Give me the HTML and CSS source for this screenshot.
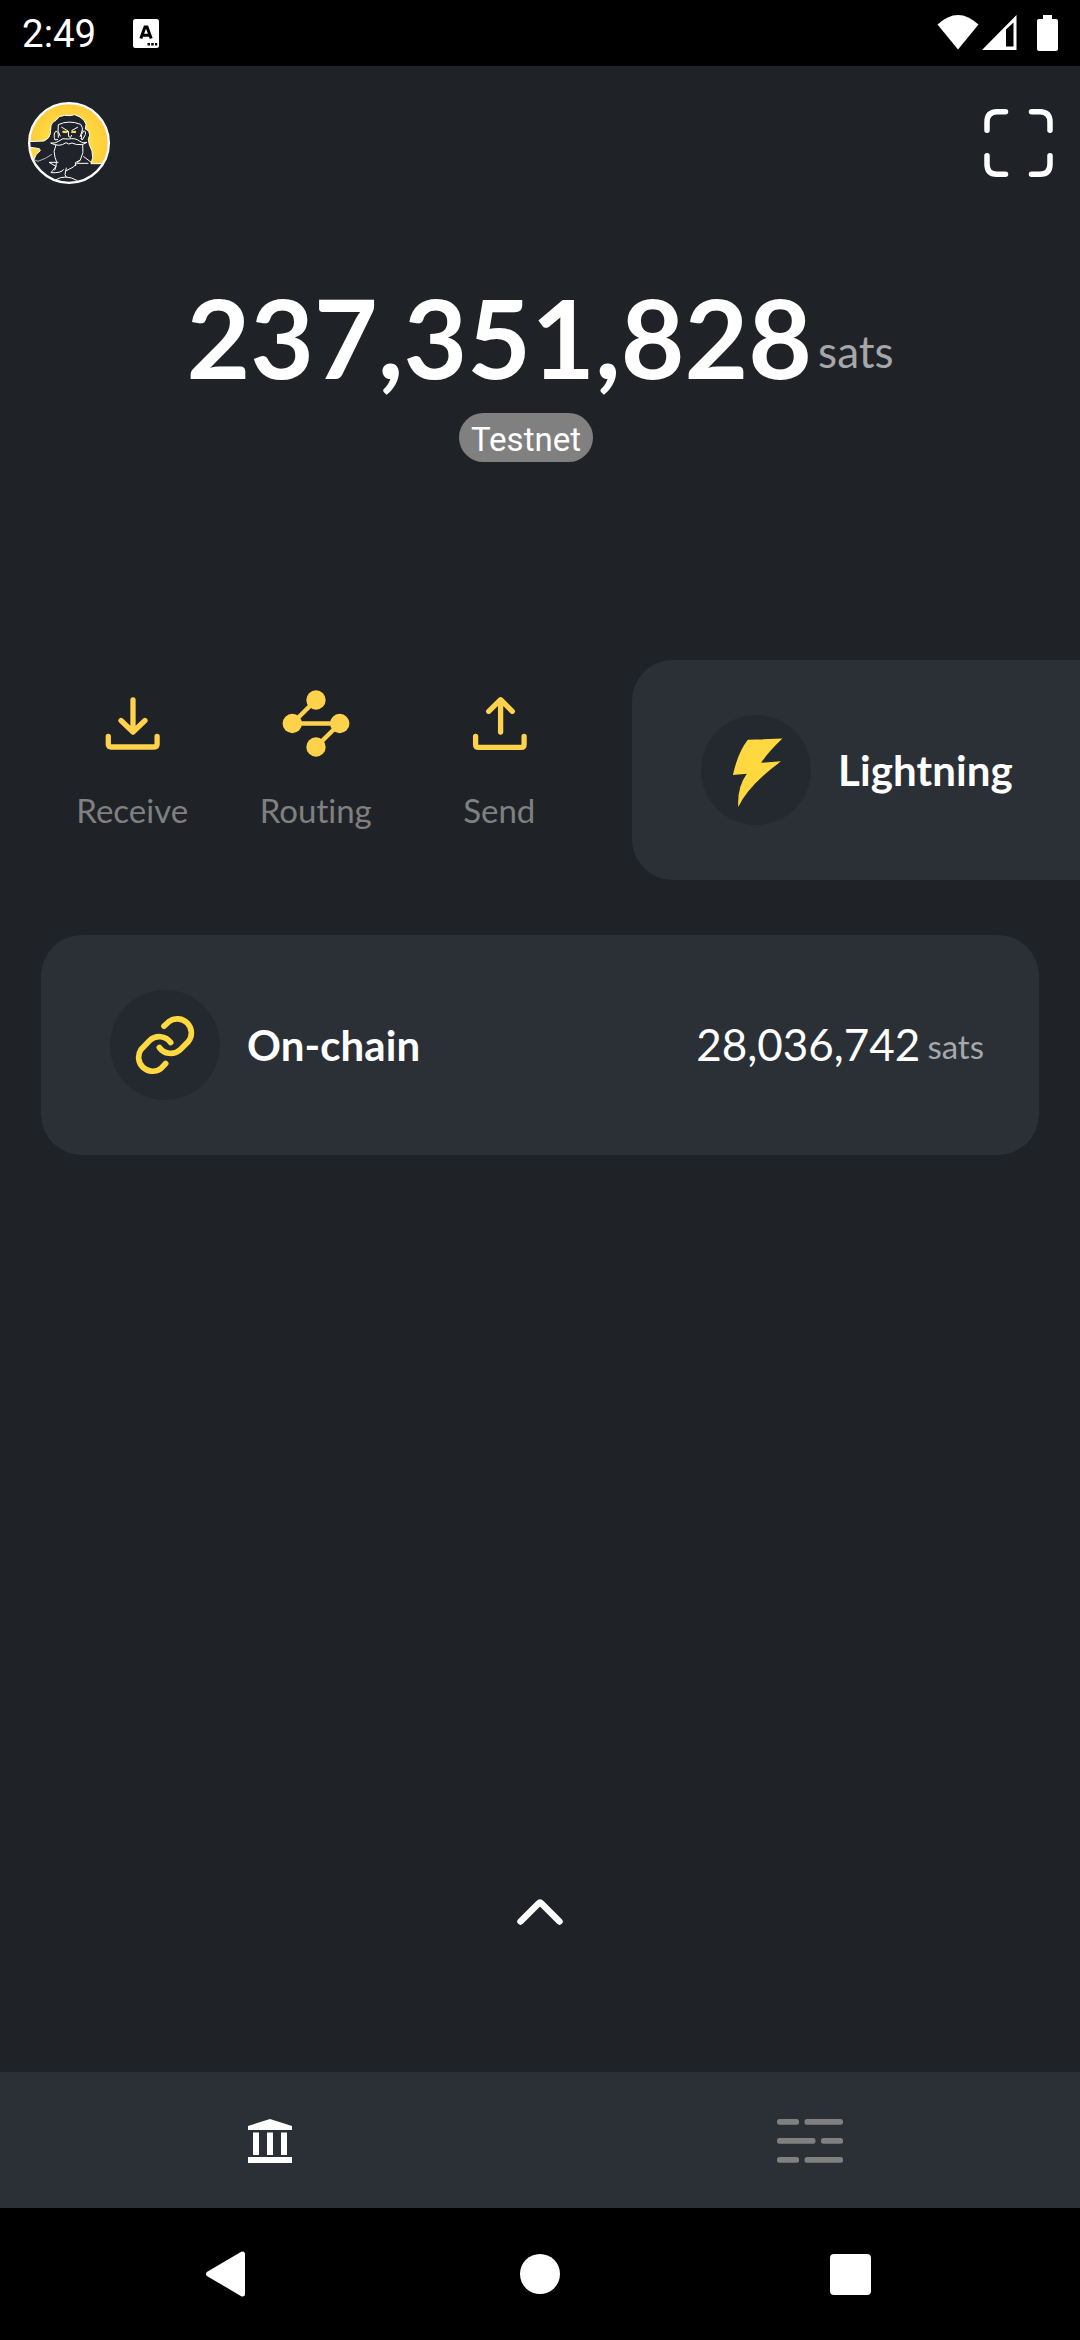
FILE: index.html
```html
<!DOCTYPE html>
<html lang="en">
<head>
<meta charset="utf-8">
<title>Wallet</title>
<link rel="stylesheet" href="styles.css">
</head>
<body>
<header class="status-bar">
  <div class="status-left">
    <span class="clock">2:49</span>
    <svg class="keyboard-icon" viewBox="0 0 26 29"><rect width="26" height="29" rx="2.5" fill="#fff"/><path d="M7.8 19.5 12 8h2l4.200 11.500M9.500 16.200h7" fill="none" stroke="#000" stroke-width="3"/><path d="M14.500 24h2.500v2.500h-2.500zM18.200 24h2.500v2.500h-2.500zM22 24h2.200v2.500H22z"/></svg>
  </div>
  <div class="status-right">
    <svg width="42" height="35" viewBox="0 0 42 35"><path d="M0.500 9.500Q21-9.500 41.500 9.500L21 34.500z" fill="#fff"/></svg>
    <svg class="signal" width="36" height="36" viewBox="0 0 36 36"><path fill-rule="evenodd" d="M0 35 34.500 0V35zM24 14.500V31.500h7.500V7.500z" fill="#fff"/></svg>
    <svg class="battery" width="21" height="36" viewBox="0 0 21 36"><path d="M6 0h9v4h4q2 0 2 2v28q0 2-2 2H2q-2 0-2-2V6q0-2 2-2h4z" fill="#fff"/></svg>
  </div>
</header>

<main class="home">
  <div class="top-bar">
    <svg class="avatar" viewBox="24 21 246 246">
      <defs>
        <clipPath id="face"><circle cx="147" cy="144" r="118"/></clipPath>
        <radialGradient id="glow"><stop offset=".6" stop-color="#ffd93f"/><stop offset="1" stop-color="#ffcb3c"/></radialGradient>
      </defs>
      <g clip-path="url(#face)">
        <circle cx="147" cy="144" r="120" fill="url(#glow)"/>
        <path d="M20 140 72 138Q89 130 91 116L93 92Q97 79 108 76L118 65 134 61 150 62 164 59 180 66 192 76 198 88 196 102 206 108 209 120 205 133 208 149 216 168 218 188 213 206H270V270H20z" fill="#20242a" stroke="#fff" stroke-width="3"/>
        <path d="M26 156 58 161 61 167 49 178 40 197 26 192z" fill="#ffd93f" stroke="#fff" stroke-width="3"/>
        <path d="M37 192 54 199 76 190 96 178" fill="none" stroke="#fff" stroke-width="2"/>
        <g fill="none" stroke="#fff" stroke-width="3">
          <path d="M115 89Q146 74 182 88L187 98V109M115 89 114 108 121 124M187 105 180 126"/>
          <path d="M107 109Q99 118 105 135L114 133M107 109Q116 107 115 128M191 108Q198 107 196 119L187 135 182 130M191 108Q181 117 185 132"/>
          <path d="M124 96 144 108 137 113M174 96 155 107 162 113M145 108 146 125 152 127 155 120"/>
          <path d="M92 144Q107 146 115 139 127 127 145 132Q167 128 178 138 188 147 201 142L187 149Q166 150 156 144L146 147 138 143Q118 158 92 144z"/>
          <path d="M108 149Q98 171 105 187 112 198 108 214L93 233Q124 235 131 223M108 214 87 202 115 202M108 214 104 226M188 149Q193 173 181 195L160 216 137 228M181 195 166 203 167 213M190 184 215 203M172 205H205M139 218 135 238 139 247"/>
          <path d="M106 255Q137 236 172 257"/>
        </g>
        <path d="M127 107h13l3 7h-15zM155 108l13-1v7h-15z" fill="#ffd93f"/>
      </g>
      <circle cx="147" cy="144" r="119.500" fill="none" stroke="#fff" stroke-width="7"/>
    </svg>
    <svg class="scan" viewBox="0 0 69 68" fill="none" stroke="#fff" stroke-width="5.500" stroke-linecap="round"><path d="M3 21.200V13Q3 3 13 2.800H21.500M47.500 2.800H56Q66 3 66 13V21.200M66 46.800V55Q66 65.200 56 65.200H47.500M21.500 65.200H13Q3 65.200 3 55V46.800"/></svg>
  </div>

  <section class="balance">
    <span class="balance-amount">237,351,828</span>
    <span class="balance-unit">sats</span>
  </section>
  <div class="network"><span class="network-badge">Testnet</span></div>

  <section class="lightning-row">
    <div class="actions">
      <div class="action">
        <svg class="action-icon" viewBox="0 0 80 80"><path d="M40 16V48M28 36.500 40 48 52 36.500M15.300 52.500V60Q15.300 63 18.300 63H61.100Q64.100 63 64.100 60V52.500"/></svg>
        <span class="action-label">Receive</span>
      </div>
      <div class="action">
        <svg class="action-icon" viewBox="0 0 80 80"><path d="M40 16 16.300 39.500H63.700L40 63" stroke-width="4.500"/><g fill="#ffd24b" stroke="none"><circle cx="40" cy="16" r="9.700"/><circle cx="16.300" cy="39.500" r="9.700"/><circle cx="63.700" cy="39.500" r="9.700"/><circle cx="40" cy="63" r="9.700"/></g></svg>
        <span class="action-label">Routing</span>
      </div>
      <div class="action">
        <svg class="action-icon" viewBox="0 0 80 80"><path d="M40.600 48V16M28.700 27.300 40.600 15.700 52.300 27.300M15.600 52.500V60.400Q15.600 63.400 18.600 63.400H61.100Q64.100 63.400 64.100 60.400V52.500"/></svg>
        <span class="action-label">Send</span>
      </div>
    </div>
    <div class="card card-lightning">
      <svg class="card-icon" viewBox="243 194.500 331 331"><path d="M384 269 488 265Q443 308 424 338L484 334Q388 403 355 471 352 410 381 371L339 375Q354 307 384 269z" fill="#ffd93f"/></svg>
      <span class="card-title">Lightning</span>
    </div>
  </section>

  <section class="card card-onchain">
    <svg class="card-icon" viewBox="240 194.500 330 330"><path d="M402 303 416 290A42 42 0 0 1 475 349L449 375A42 42 0 0 1 388 367M422 352A42 42 0 0 0 359 346L333 373A42 42 0 0 0 393 430L407 415" fill="none" stroke="#ffd93f" stroke-width="17" stroke-linecap="round"/></svg>
    <span class="card-title">On-chain</span>
    <span class="card-amount">28,036,742</span>
    <span class="card-unit">sats</span>
  </section>

  <div class="drawer-handle">
    <svg width="48" height="28" viewBox="0 0 48 28"><path d="M4.500 22.500 22.500 4.500Q24 3 25.500 4.500L43.500 22.500" fill="none" stroke="#fff" stroke-width="6.500" stroke-linecap="round" stroke-linejoin="round"/></svg>
  </div>
</main>

<nav class="tabs">
  <div class="tab">
    <svg width="44" height="44" viewBox="0 0 44 44" fill="#fff"><path d="M0 7 22 0 44 7V11H0zM5 13.500h6v22.500H5zM19 13.500h6v22.500h-6zM33 13.500h6v22.500h-6zM0 38h44v6H0z"/></svg>
  </div>
  <div class="tab">
    <svg width="66" height="44" viewBox="0 0 66 44" fill="#808080"><rect width="22" height="5.800" rx="2.500"/><rect x="27.500" width="38.500" height="5.800" rx="2.500"/><rect y="19" width="38.500" height="5.800" rx="2.500"/><rect x="44" y="19" width="22" height="5.800" rx="2.500"/><rect y="38" width="22" height="5.800" rx="2.500"/><rect x="27.500" y="38" width="38.500" height="5.800" rx="2.500"/></svg>
  </div>
</nav>

<footer class="system-nav">
  <svg class="nav-back" width="39" height="46" viewBox="0 0 39 46"><path d="M2.500 23 36.500 3V43z" fill="#fff" stroke="#fff" stroke-width="5" stroke-linejoin="round"/></svg>
  <span class="nav-home"></span>
  <span class="nav-recent"></span>
</footer>
</body>
</html>
```

FILE: styles.css
```css
* { box-sizing: border-box; }

body {
  margin: 0;
  width: 1080px;
  height: 2340px;
  overflow: hidden;
  display: flex;
  flex-direction: column;
  background: #1f2328;
  color: #fff;
  font-family: Lato, sans-serif;
  font-variant-ligatures: none;
}

svg { display: block; flex: none; }

.status-bar {
  height: 66px;
  flex: none;
  display: flex;
  justify-content: space-between;
  padding: 0 22px;
  background: #000;
}
.status-left { display: flex; align-items: center; gap: 37px; }
.clock { font: 38.5px/66px Roboto, sans-serif; padding-top: 2px; }
.keyboard-icon { width: 26px; height: 29px; }
.status-right { display: flex; align-items: flex-start; padding-top: 15px; }
.signal { margin-left: 3px; }
.battery { margin-left: 19px; }

.home {
  flex: 1;
  display: flex;
  flex-direction: column;
}
.top-bar {
  display: flex;
  justify-content: space-between;
  align-items: center;
  padding: 36px 27px 0 28px;
}
.avatar { width: 82px; height: 82px; }
.scan { width: 69px; height: 68px; }

.balance {
  display: flex;
  justify-content: center;
  gap: 6px;
  height: 132px;
  margin-top: 86px;
}
.balance-amount { font-size: 110px; font-weight: 700; line-height: 132px; }
.balance-unit { font-size: 44px; line-height: 53px; padding-top: 55px; color: #a5a7a9; }

.network { display: flex; padding: 11px 0 0 459px; }
.network-badge {
  width: 134px;
  height: 49px;
  border-radius: 24.500px;
  background: #808080;
  font: 33px/54px Roboto, sans-serif;
  text-align: center;
}

.lightning-row { display: flex; margin-top: 198px; height: 220px; }
.actions { display: flex; padding: 24px 0 0 41px; width: 632px; flex: none; }
.action { width: 183.500px; display: flex; flex-direction: column; align-items: center; gap: 26px; }
.action-icon {
  width: 80px;
  height: 80px;
  fill: none;
  stroke: #ffd24b;
  stroke-width: 5.300;
  stroke-linecap: round;
  stroke-linejoin: round;
}
.action-label { margin-right: 1px; font-size: 33px; line-height: 40px; color: #808080; }

.card {
  display: flex;
  align-items: center;
  height: 220px;
  flex: none;
  padding: 0 55px 0 69px;
  background: #2b3037;
  border-radius: 41px;
}
.card-lightning { width: 448px; border-radius: 41px 0 0 41px; }
.card-onchain { margin: 55px 41px 0; }
.card-icon {
  width: 110px;
  height: 110px;
  border-radius: 50%;
  background: #242930;
}
.card-title { margin-left: 27px; font-size: 42px; font-weight: 700; line-height: 50px; letter-spacing: 0.1px; }
.card-amount { margin-left: auto; padding-bottom: 2px; font-size: 44px; line-height: 53px; }
.card-unit { margin-left: 7px; padding-top: 2px; font-size: 33px; line-height: 40px; color: #a5a7aa; }

.drawer-handle { display: flex; justify-content: center; margin-top: auto; padding-bottom: 145px; }

.tabs {
  display: grid;
  grid-template-columns: 1fr 1fr;
  height: 136px;
  flex: none;
  background: #2b3037;
}
.tab { display: flex; justify-content: center; padding-top: 47px; }

.system-nav {
  display: flex;
  align-items: center;
  height: 132px;
  flex: none;
  padding-left: 206px;
  background: #000;
}
.nav-home { width: 40px; height: 40px; margin-left: 275px; border-radius: 50%; background: #fff; }
.nav-recent { width: 41px; height: 41px; margin: 1px 0 0 270px; border-radius: 4px; background: #fff; }
```
